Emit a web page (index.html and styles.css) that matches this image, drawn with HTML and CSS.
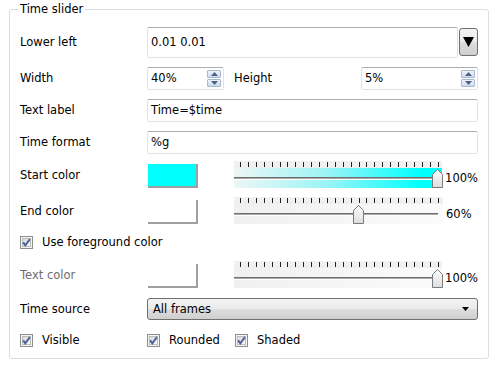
FILE: index.html
```html
<!DOCTYPE html>
<html lang="en">
<head>
    <meta charset="UTF-8">
    <title>Time slider</title>
    <link rel="stylesheet" href="styles.css">
</head>
<body>

    <svg class="defs" width="0" height="0">
        <defs>
            <linearGradient id="box-fill" x1="0" y1="0" x2="1" y2="1">
                <stop offset="0" stop-color="#d8d8d8"/>
                <stop offset="1" stop-color="#fbfbfb"/>
            </linearGradient>
            <linearGradient id="thumb-fill" x1="0" y1="0" x2="0" y2="1">
                <stop offset="0" stop-color="#fdfdfd"/>
                <stop offset="1" stop-color="#dedede"/>
            </linearGradient>
            <symbol id="check" viewBox="0 0 13 13">
                <rect x="0.5" y="0.5" width="12" height="12" fill="#f3f3f3" stroke="#8e8f8f"/>
                <rect x="2.5" y="2.5" width="8" height="8" fill="url(#box-fill)" stroke="#bcbcbc"/>
                <path d="M3.2 6.4 L5.3 9.4 L9.9 3.1" stroke="#4b5f99" stroke-width="1.9" fill="none"/>
            </symbol>
            <symbol id="thumb" viewBox="0 0 11 19">
                <path d="M0.5 5.5 L5.5 0.5 L10.5 5.5 V18.5 H0.5 Z" fill="url(#thumb-fill)" stroke="#7a7a7a"/>
            </symbol>
        </defs>
    </svg>

    <fieldset class="group">
        <legend>Time slider</legend>

        <div class="row row-lower">
            <span class="label">Lower left</span>
            <div class="field field-lower">0.01 0.01</div>
            <button class="drop-btn">
                <svg width="11" height="10" viewBox="0 0 11 10"><path d="M0 0 H11 L5.5 10 Z" fill="#000"/></svg>
            </button>
        </div>

        <div class="row row-size">
            <span class="label">Width</span>
            <div class="field spin spin-width">
                <span class="spin-value">40%</span>
                <span class="spin-btns">
                    <span class="spin-btn"><svg width="7" height="4" viewBox="0 0 7 4"><path d="M0 4 L3.5 0 L7 4 Z" fill="#4d6185"/></svg></span>
                    <span class="spin-btn"><svg width="7" height="4" viewBox="0 0 7 4"><path d="M0 0 H7 L3.5 4 Z" fill="#4d6185"/></svg></span>
                </span>
            </div>
            <span class="label label-height">Height</span>
            <div class="field spin spin-height">
                <span class="spin-value">5%</span>
                <span class="spin-btns">
                    <span class="spin-btn"><svg width="7" height="4" viewBox="0 0 7 4"><path d="M0 4 L3.5 0 L7 4 Z" fill="#4d6185"/></svg></span>
                    <span class="spin-btn"><svg width="7" height="4" viewBox="0 0 7 4"><path d="M0 0 H7 L3.5 4 Z" fill="#4d6185"/></svg></span>
                </span>
            </div>
        </div>

        <div class="row row-text">
            <span class="label">Text label</span>
            <div class="field field-full">Time=$time</div>
        </div>

        <div class="row row-format">
            <span class="label">Time format</span>
            <div class="field field-full">%g</div>
        </div>

        <div class="row row-color row-start">
            <span class="label">Start color</span>
            <div class="swatch swatch-cyan"></div>
            <div class="slider">
                <div class="ticks"></div>
                <div class="band band-cyan">
                    <div class="track"></div>
                    <svg class="thumb" style="left: 198px" width="11" height="19"><use href="#thumb"/></svg>
                </div>
            </div>
            <span class="value">100%</span>
        </div>

        <div class="row row-color row-end">
            <span class="label">End color</span>
            <div class="swatch"></div>
            <div class="slider">
                <div class="ticks"></div>
                <div class="band">
                    <div class="track"></div>
                    <svg class="thumb" style="left: 119px" width="11" height="19"><use href="#thumb"/></svg>
                </div>
            </div>
            <span class="value">60%</span>
        </div>

        <div class="row row-check row-fg">
            <svg class="check" width="13" height="13"><use href="#check"/></svg>
            <span>Use foreground color</span>
        </div>

        <div class="row row-color row-textcolor">
            <span class="label label-disabled">Text color</span>
            <div class="swatch"></div>
            <div class="slider">
                <div class="ticks"></div>
                <div class="band">
                    <div class="track"></div>
                    <svg class="thumb" style="left: 198px" width="11" height="19"><use href="#thumb"/></svg>
                </div>
            </div>
            <span class="value">100%</span>
        </div>

        <div class="row row-source">
            <span class="label">Time source</span>
            <div class="combo">
                <span>All frames</span>
                <svg width="7" height="4" viewBox="0 0 7 4"><path d="M0 0 H7 L3.5 4 Z" fill="#000"/></svg>
            </div>
        </div>

        <div class="row row-check row-flags">
            <div class="flag flag-visible">
                <svg class="check" width="13" height="13"><use href="#check"/></svg>
                <span>Visible</span>
            </div>
            <div class="flag flag-rounded">
                <svg class="check" width="13" height="13"><use href="#check"/></svg>
                <span>Rounded</span>
            </div>
            <div class="flag">
                <svg class="check" width="13" height="13"><use href="#check"/></svg>
                <span>Shaded</span>
            </div>
        </div>
    </fieldset>

</body>
</html>
```

FILE: styles.css
```css
* {
    box-sizing: border-box;
}

body {
    margin: 0;
    background: #fff;
    font-family: 'DejaVu Sans', sans-serif;
    font-size: 11.5px;
    color: #000;
}

.defs {
    position: absolute;
}

.group {
    box-sizing: content-box;
    width: 458px;
    margin: 2px 0 0 9px;
    padding: 11px 10px 9px 10px;
    border: 1px solid #d5dfe5;
    border-radius: 3px;
    min-inline-size: 0;
}

.group legend {
    padding: 0 2px;
    margin-left: -2px;
    line-height: 14px;
}

.row {
    display: flex;
    align-items: center;
}

.label {
    width: 127px;
    flex-shrink: 0;
}

.label-disabled {
    color: #6d6d6d;
}

/* text boxes */
.field {
    display: flex;
    align-items: center;
    padding-left: 3px;
    border: 1px solid #dfe3e8;
    border-top-color: #abadb3;
    border-radius: 2px;
    background: #fff;
}

.row-lower {
    height: 30px;
}

.field-lower {
    width: 311px;
    height: 31px;
}

.drop-btn {
    width: 19px;
    height: 28px;
    margin-left: 1px;
    padding: 0;
    display: flex;
    align-items: center;
    justify-content: center;
    border: 1px solid #707070;
    border-radius: 3px;
    background: linear-gradient(#f2f2f2, #ebebeb 50%, #dddddd 51%, #cfcfcf);
}

.row-size,
.row-text,
.row-format {
    height: 22px;
    margin-top: 10px;
}

.field-full {
    width: 331px;
    height: 23px;
}

.spin {
    height: 23px;
    justify-content: space-between;
    padding-right: 2px;
}

.spin-width {
    width: 77px;
}

.spin-height {
    width: 117px;
}

.label-height {
    margin-left: 10px;
}

.spin-btns {
    display: flex;
    flex-direction: column;
    gap: 1px;
}

.spin-btn {
    width: 14px;
    height: 8px;
    display: flex;
    align-items: center;
    justify-content: center;
    border: 1px solid #a9b8cc;
    border-radius: 1px;
    background: linear-gradient(#eef3fa, #cddbec);
}

/* colour rows */
.row-color {
    height: 28px;
    align-items: flex-end;
}

.row-color .label {
    align-self: center;
}

.row-start {
    margin-top: 8px;
}

.row-end {
    margin-top: 8px;
}

.row-textcolor {
    margin-top: 10px;
}

.swatch {
    width: 50px;
    height: 24px;
    margin: 0 36px 1px 1px;
    border-right: 2px solid #a0a0a0;
    border-bottom: 2px solid #a0a0a0;
    background: #fff;
}

.swatch-cyan {
    background: #00ffff;
}

.slider {
    width: 209px;
    height: 27px;
    margin-bottom: 1px;
}

.ticks {
    height: 7px;
    background:
        repeating-linear-gradient(to right, #222 0 1px, transparent 1px 7.9px) 6px 1px / 200px 5px no-repeat,
        #f0f0f0;
}

.band {
    position: relative;
    height: 20px;
    background: linear-gradient(to right, #f0f0f0, #fbfbfb);
}

.band-cyan {
    background: linear-gradient(to right, #eef6f6, #9af4f6 45%, #00ffff 90%);
}

.track {
    position: absolute;
    left: 0;
    top: 9px;
    width: 204px;
    height: 3px;
    background: linear-gradient(#6f6f6f 0 1px, #a8a8a8 1px 2px, #fff 2px);
}

.thumb {
    position: absolute;
    top: 1px;
}

.value {
    margin: 0 0 4px 3px;
}

/* checkboxes */
.row-check {
    height: 18px;
}

.row-fg {
    margin-top: 8px;
}

.check {
    flex-shrink: 0;
    margin-right: 9px;
}

.flag {
    display: flex;
    align-items: center;
}

.flag-visible {
    width: 127px;
}

.flag-rounded {
    width: 88px;
}

.row-flags {
    margin-top: 12px;
}

/* combo box */
.row-source {
    height: 21px;
    margin-top: 9px;
}

.combo {
    width: 331px;
    height: 22px;
    display: flex;
    align-items: center;
    justify-content: space-between;
    padding: 0 8px 0 5px;
    border: 1px solid #707070;
    border-radius: 3px;
    background: linear-gradient(#f2f2f2, #ebebeb 50%, #dddddd 51%, #cfcfcf);
}
```
